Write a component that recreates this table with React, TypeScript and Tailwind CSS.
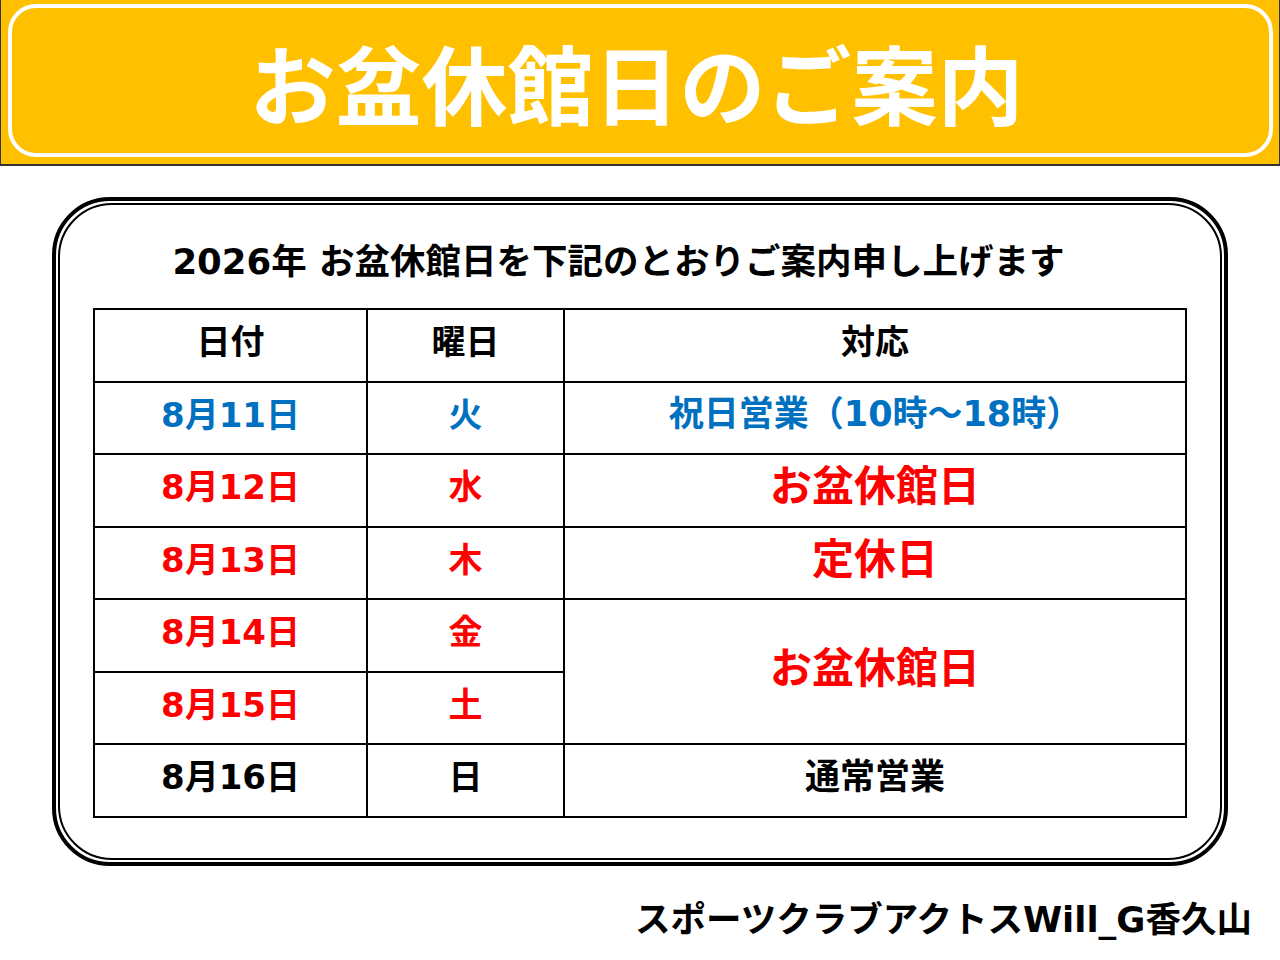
import React from 'react';

const FONT = '"DejaVu Sans", "Noto Sans CJK JP", sans-serif';
const CJK = '"Noto Sans CJK JP", sans-serif';

type Row = {
  date: string;
  day: string;
  color: string;
  note?: string;
  noteClass?: string;
  span?: number;
};

const rows: Row[] = [
  { date: '8月11日', day: '火', color: 'text-[#0070C0]', note: '祝日営業（10時～18時）', noteClass: 'text-[35px] text-[#0070C0]' },
  { date: '8月12日', day: '水', color: 'text-[#FF0000]', note: 'お盆休館日', noteClass: 'text-[42px] text-[#FF0000]' },
  { date: '8月13日', day: '木', color: 'text-[#FF0000]', note: '定休日', noteClass: 'text-[42px] text-[#FF0000]' },
  { date: '8月14日', day: '金', color: 'text-[#FF0000]', note: 'お盆休館日', noteClass: 'text-[42px] text-[#FF0000]', span: 2 },
  { date: '8月15日', day: '土', color: 'text-[#FF0000]' },
  { date: '8月16日', day: '日', color: 'text-black', note: '通常営業', noteClass: 'text-[35px] text-black' },
];

const cell = 'border-2 border-black text-center align-middle p-0 pb-[6px] leading-none';

const App: React.FC = () => {
  return (
    <div className="w-[1280px] h-[960px] bg-white overflow-hidden" style={{ fontFamily: FONT }}>
      <div className="h-[166px] bg-[#FFC000] border-x border-b-2 border-[#333333] pl-[7px] pr-[6px] pt-[4px] pb-[7px]">
        <div className="h-full border-4 border-white rounded-[28px] flex items-center justify-center pt-[2px] pr-[8px]">
          <h1 className="text-white font-bold text-[86px] leading-none" style={{ fontFamily: CJK }}>
            お盆休館日のご案内
          </h1>
        </div>
      </div>

      <div className="mt-[31px] mx-auto w-[1176px] h-[669px] border-4 border-black rounded-[58px] p-[2px]">
        <div className="h-full border-2 border-black rounded-[54px] flex flex-col">
          <div className="h-[103px] flex items-center justify-center pt-[10px] pr-[43px]">
            <p className="text-[35.5px] font-bold text-black leading-none">2026年 お盆休館日を下記のとおりご案内申し上げます</p>
          </div>
          <table className="mx-auto w-[1092px] border-collapse table-fixed font-bold">
            <colgroup>
              <col className="w-[273px]" />
              <col className="w-[197px]" />
              <col className="w-[622px]" />
            </colgroup>
            <thead>
              <tr className="h-[72.5px]">
                <th className={`${cell} text-[34px] text-black`}>日付</th>
                <th className={`${cell} text-[34px] text-black`}>曜日</th>
                <th className={`${cell} text-[34px] text-black`}>対応</th>
              </tr>
            </thead>
            <tbody>
              {rows.map((row) => (
                <tr key={row.date} className="h-[72.5px]">
                  <td className={`${cell} text-[34px] ${row.color}`}>{row.date}</td>
                  <td className={`${cell} text-[34px] ${row.color}`}>{row.day}</td>
                  {row.note && (
                    <td className={`${cell} ${row.noteClass}`} rowSpan={row.span}>
                      {row.note}
                    </td>
                  )}
                </tr>
              ))}
            </tbody>
          </table>
        </div>
      </div>

      <div className="mt-[36px] pr-[28px] text-right">
        <span className="text-[35.5px] font-bold text-black leading-none">スポーツクラブアクトスWill_G香久山</span>
      </div>
    </div>
  );
};

export default App;
